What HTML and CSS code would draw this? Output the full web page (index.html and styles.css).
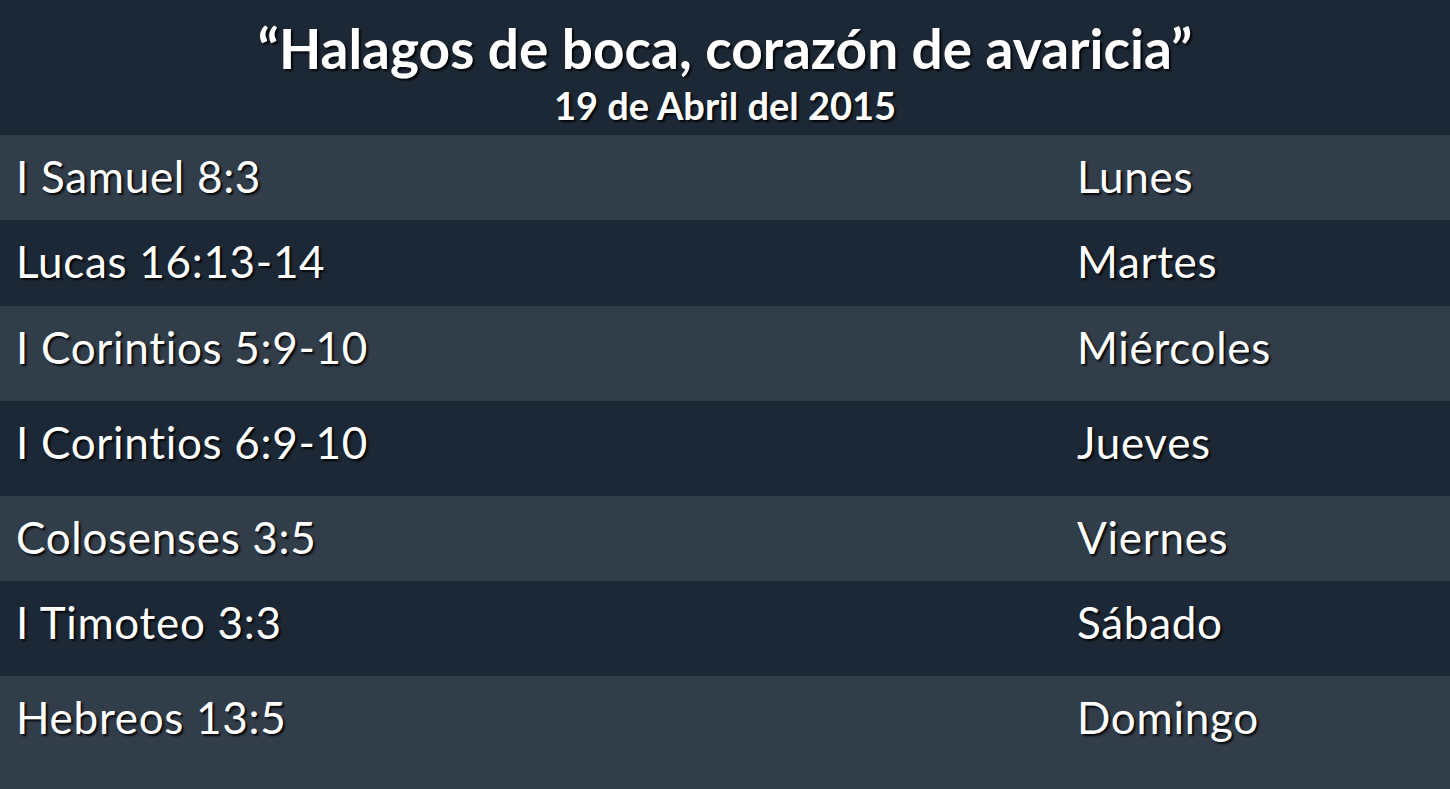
FILE: index.html
```html
<!DOCTYPE html>
<html lang="es">
<head>
<meta charset="utf-8">
<title>Halagos de boca, corazón de avaricia</title>
<link rel="stylesheet" href="styles.css">
</head>
<body>
<main class="slide">
  <header class="head">
    <h1 class="title">“Halagos de boca, corazón de avaricia”</h1>
    <p class="date">19 de Abril del 2015</p>
  </header>
  <div class="row light r85"><span class="ref">I Samuel 8:3</span><span class="day">Lunes</span></div>
  <div class="row dark r86"><span class="ref">Lucas 16:13-14</span><span class="day">Martes</span></div>
  <div class="row light r95"><span class="ref">I Corintios 5:9-10</span><span class="day">Miércoles</span></div>
  <div class="row dark r95"><span class="ref">I Corintios 6:9-10</span><span class="day">Jueves</span></div>
  <div class="row light r85"><span class="ref">Colosenses 3:5</span><span class="day">Viernes</span></div>
  <div class="row dark r95"><span class="ref">I Timoteo 3:3</span><span class="day">Sábado</span></div>
  <div class="row light r113"><span class="ref">Hebreos 13:5</span><span class="day">Domingo</span></div>
</main>
</body>
</html>
```

FILE: styles.css
```css
html, body {
  margin: 0;
  padding: 0;
  background: #1c2835;
}
.slide {
  width: 1450px;
  height: 789px;
  overflow: hidden;
  display: flex;
  flex-direction: column;
  font-family: Lato, "Open Sans", sans-serif;
  color: #ffffff;
  text-shadow: 2px 2px 2px rgba(0, 0, 0, 0.85);
}
.head {
  height: 135px;
  flex: none;
  background: #1c2835;
  display: flex;
  flex-direction: column;
  align-items: center;
  box-sizing: border-box;
  padding-top: 18px;
}
.title {
  margin: 0;
  font-size: 55px;
  font-weight: 700;
  line-height: 60px;
}
.date {
  margin: 6px 0 0;
  font-size: 38px;
  font-weight: 700;
  line-height: 42px;
}
.row {
  flex: none;
  display: grid;
  grid-template-columns: 1061px 1fr;
  padding-left: 16px;
  padding-top: 16px;
  box-sizing: border-box;
  font-size: 44px;
  line-height: 50px;
  letter-spacing: 0.7px;
}
.light { background: #323d4a; }
.dark { background: #1c2835; }
.r85 { height: 85px; }
.r86 { height: 86px; }
.r95 { height: 95px; }
.r113 { height: 113px; }
```
